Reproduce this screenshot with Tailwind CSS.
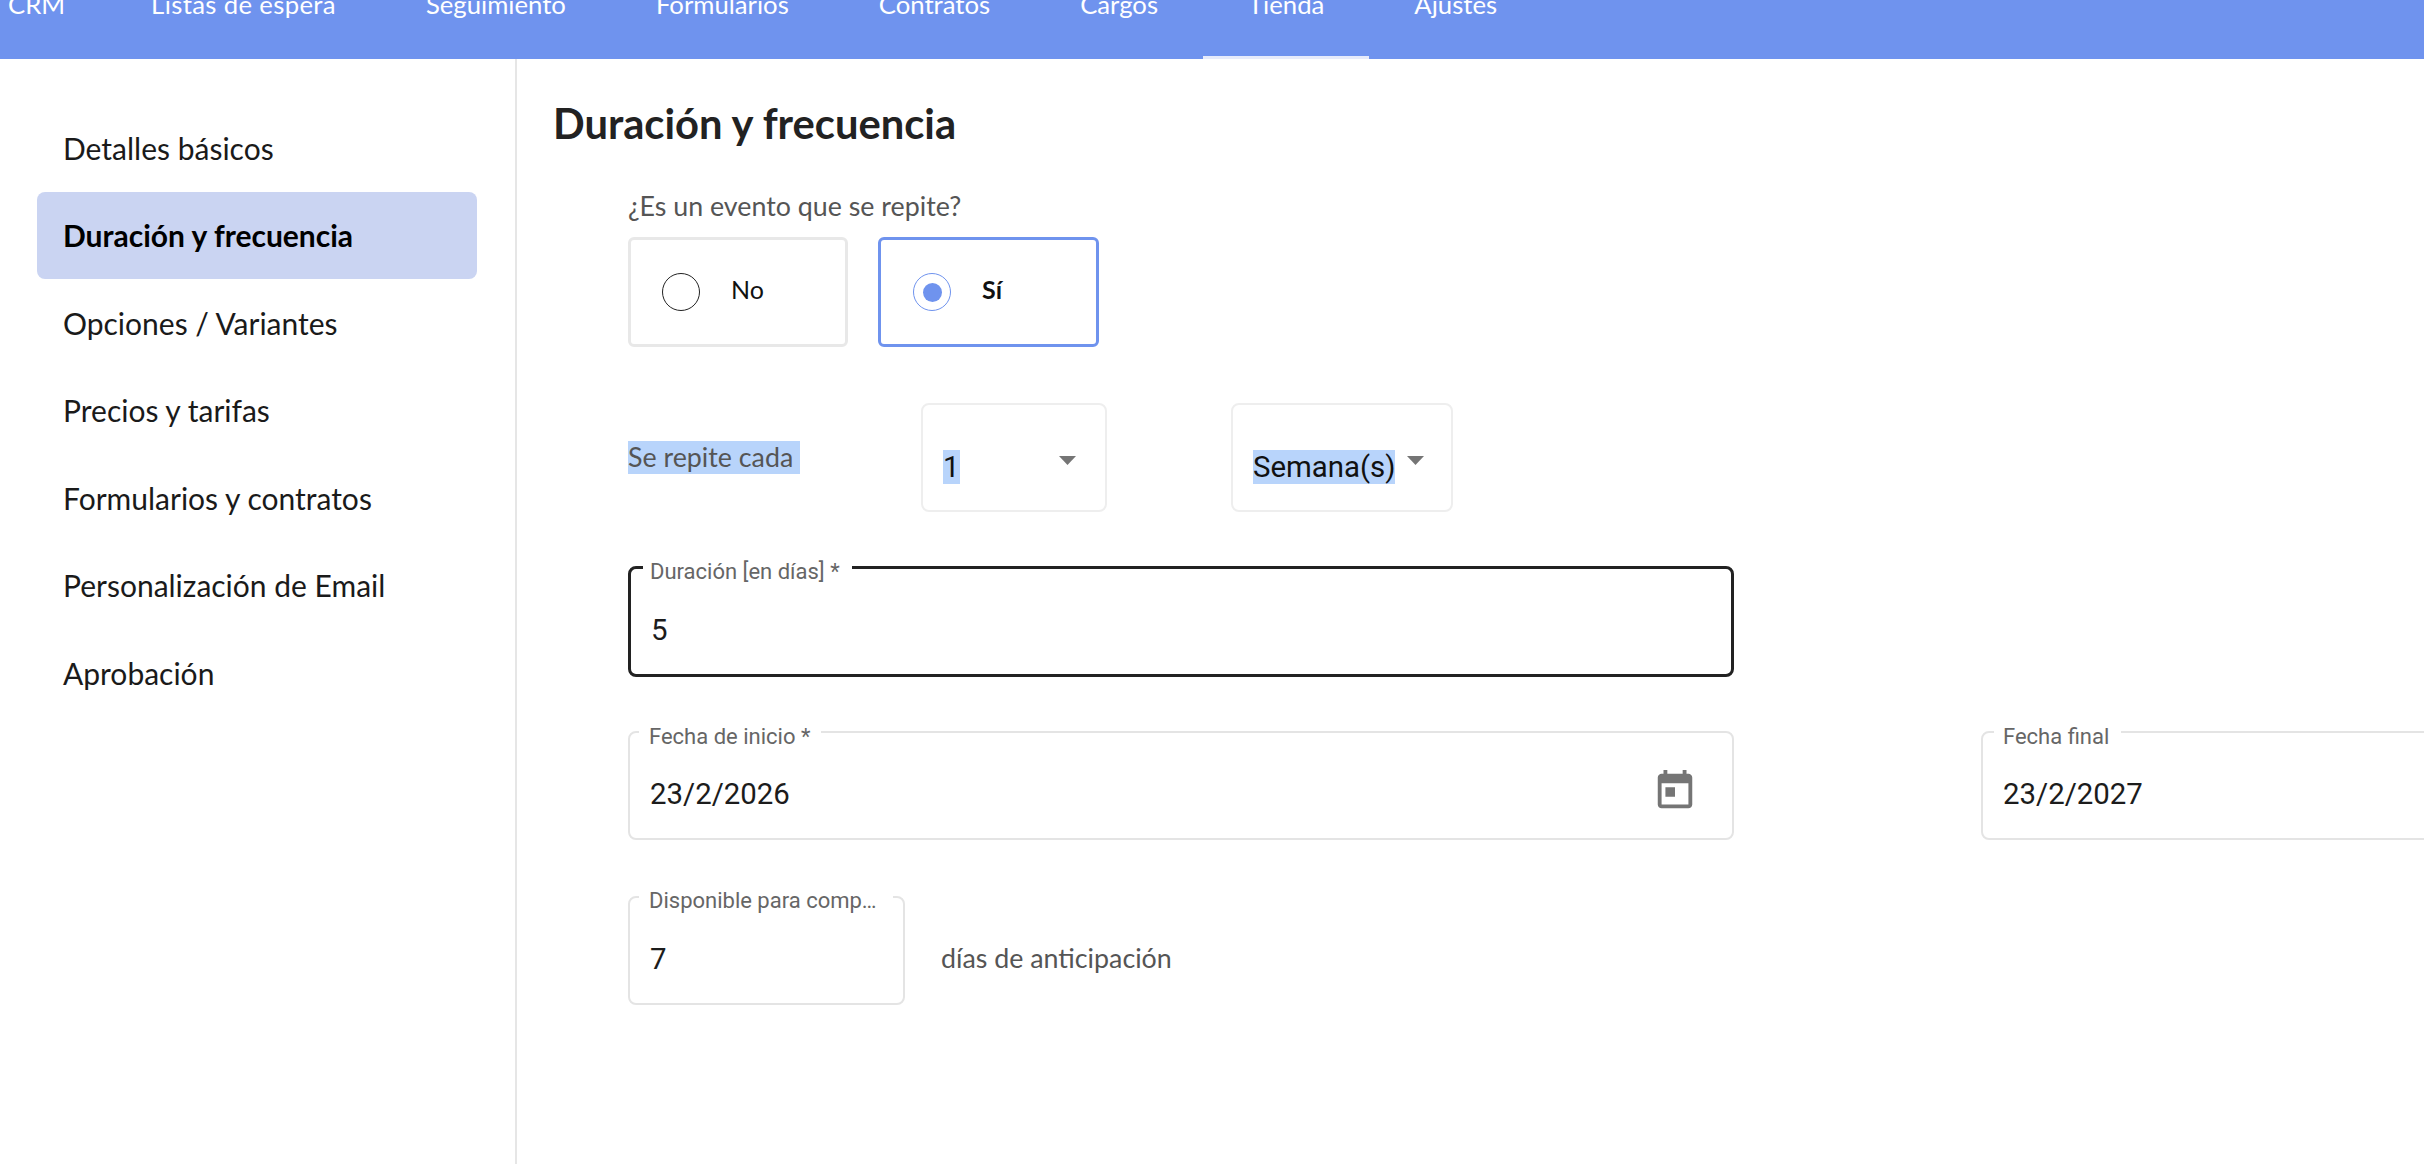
<!DOCTYPE html>
<html lang="es">
<head>
<meta charset="utf-8">
<script src="https://cdn.jsdelivr.net/npm/@tailwindcss/browser@4"></script>
<title>Duración y frecuencia</title>
</head>
<body class="bg-white overflow-hidden font-['Lato',sans-serif]">
<div class="w-[2424px] h-[1164px] overflow-hidden flex flex-col">
  <header class="h-[59px] shrink-0 bg-[#6f93ee] overflow-hidden">
    <nav class="flex ml-[-37px] text-white text-[25.7px] leading-[30px] h-[59px]">
      <div class="pl-[45px] pr-[41px] h-full"><div class="mt-[-11px]">CRM</div></div>
      <div class="px-[45px] h-full"><div class="mt-[-11px] tracking-[0.35px]">Listas de espera</div></div>
      <div class="px-[45px] h-full"><div class="mt-[-11px]">Seguimiento</div></div>
      <div class="px-[45px] h-full"><div class="mt-[-11px]">Formularios</div></div>
      <div class="px-[45px] h-full"><div class="mt-[-11px]">Contratos</div></div>
      <div class="px-[45px] h-full"><div class="mt-[-11px]">Cargos</div></div>
      <div class="px-[45px] h-full border-b-[3px] border-[#e6ebfb]"><div class="mt-[-11px]">Tienda</div></div>
      <div class="px-[45px] h-full"><div class="mt-[-11px]">Ajustes</div></div>
    </nav>
  </header>
  <main class="flex flex-1 min-h-0">
    <aside class="w-[517px] shrink-0 border-r-2 border-[#e6e6e6] pt-[45px] pl-[37px] pr-[38px] text-[30px] text-[#1a1a1a]">
      <div class="h-[87.5px] flex items-center pl-[26px] pt-[1px]">Detalles básicos</div>
      <div class="h-[87.5px] flex items-center pl-[26px] pt-[1px] bg-[#cad4f2] rounded-lg font-bold text-black">Duración y frecuencia</div>
      <div class="h-[87.5px] flex items-center pl-[26px] pt-[1px]">Opciones / Variantes</div>
      <div class="h-[87.5px] flex items-center pl-[26px] pt-[1px]">Precios y tarifas</div>
      <div class="h-[87.5px] flex items-center pl-[26px] pt-[1px]">Formularios y contratos</div>
      <div class="h-[87.5px] flex items-center pl-[26px] pt-[1px]">Personalización de Email</div>
      <div class="h-[87.5px] flex items-center pl-[26px] pt-[1px]">Aprobación</div>
    </aside>
    <section class="flex-1 min-w-0 pl-[36px]">
      <h1 class="mt-[42px] h-[46px] leading-[44px] text-[41.7px] font-bold text-[#222]">Duración y frecuencia</h1>
      <div class="ml-[75px]">
        <p class="mt-[43px] h-[32px] leading-[32px] text-[26.8px] text-[#555]">¿Es un evento que se repite?</p>
        <div class="mt-[15px] flex gap-[30px]">
          <div class="w-[220px] h-[110px] rounded-md border-[3px] border-[#e8e8e8] flex items-center pl-[31px]">
            <span class="w-[38px] h-[38px] rounded-full border-[1.5px] border-[#222]"></span>
            <span class="ml-[31px] pb-[4px] text-[25px] text-[#111]">No</span>
          </div>
          <div class="w-[221px] h-[110px] rounded-md border-[3px] border-[#6f93ee] flex items-center pl-[32px]">
            <span class="w-[38px] h-[38px] rounded-full border-[1.5px] border-[#6f93ee] flex items-center justify-center"><span class="w-[19px] h-[19px] rounded-full bg-[#6f93ee]"></span></span>
            <span class="ml-[31px] pb-[4px] text-[25px] font-bold text-[#111]">Sí</span>
          </div>
        </div>
        <div class="mt-[56px] flex items-center h-[109px]">
          <div class="w-[293px]"><span class="inline-block h-[33px] leading-[33px] pr-[7px] bg-[#b8d4fb] text-[26.8px] text-[#555]">Se repite cada</span></div>
          <div class="w-[186px] h-[109px] rounded-lg border-2 border-[#eeeeee] pl-[20px] pr-[29px] pt-[45px] flex justify-between items-start font-['Roboto',sans-serif] text-[29.4px] text-[#111]">
            <span class="h-[34px] leading-[34px] bg-[#b8d4fb]">1</span>
            <svg class="mt-[6px] w-[17px] h-[9px] fill-[#757575]" viewBox="0 0 17 9"><path d="M0 0h17l-8.5 9z"/></svg>
          </div>
          <div class="ml-[124px] w-[222px] h-[109px] rounded-lg border-2 border-[#eeeeee] pl-[20px] pr-[27px] pt-[45px] flex justify-between items-start font-['Roboto',sans-serif] text-[29.4px] text-[#111]">
            <span class="h-[34px] leading-[34px] bg-[#b8d4fb]">Semana(s)</span>
            <svg class="mt-[6px] w-[17px] h-[9px] fill-[#757575]" viewBox="0 0 17 9"><path d="M0 0h17l-8.5 9z"/></svg>
          </div>
        </div>
        <div class="relative mt-[54px] w-[1106px] h-[111px] rounded-lg border-[3px] border-[#222] pl-[20px] pt-[43px] font-['Roboto',sans-serif] text-[29.4px] leading-[36px] text-[#1c1c1c]">
          5
          <span class="absolute left-[12px] top-[-10px] pl-[7px] pr-[12px] h-[26px] leading-[26px] bg-white text-[22px] text-[#666]">Duración [en días] *</span>
        </div>
        <div class="mt-[54px] flex gap-[247px] w-[3000px]">
          <div class="relative w-[1106px] h-[109px] rounded-lg border-2 border-[#e4e4e4] pl-[20px] pt-[43px] font-['Roboto',sans-serif] text-[29.4px] leading-[36px] text-[#1c1c1c]">
            23/2/2026
            <span class="absolute left-[9px] top-[-9px] pl-[10px] pr-[11px] h-[26px] leading-[26px] bg-white text-[22px] text-[#666]">Fecha de inicio *</span>
            <svg class="absolute left-[1022px] top-[35px] w-[46px] h-[46px] fill-[#757575]" viewBox="0 0 24 24"><path d="M19 3h-1V1h-2v2H8V1H6v2H5c-1.11 0-1.99.9-1.99 2L3 19c0 1.1.89 2 2 2h14c1.1 0 2-.9 2-2V5c0-1.1-.9-2-2-2zm0 16H5V8h14v11zM7 10h5v5H7z"/></svg>
          </div>
          <div class="relative w-[1106px] h-[109px] rounded-lg border-2 border-[#e4e4e4] pl-[20px] pt-[43px] font-['Roboto',sans-serif] text-[29.4px] leading-[36px] text-[#1c1c1c]">
            23/2/2027
            <span class="absolute left-[11px] top-[-9px] pl-[9px] pr-[12px] h-[26px] leading-[26px] bg-white text-[22px] text-[#666]">Fecha final</span>
          </div>
        </div>
        <div class="mt-[56px] flex items-center">
          <div class="relative w-[277px] h-[109px] rounded-lg border-2 border-[#e4e4e4] pl-[20px] pt-[43px] font-['Roboto',sans-serif] text-[29.4px] leading-[36px] text-[#1c1c1c]">
            7
            <span class="absolute left-[9px] top-[-10px] pl-[10px] pr-[13px] w-[254px] truncate h-[26px] leading-[26px] bg-white text-[22px] text-[#666]">Disponible para compra con</span>
          </div>
          <span class="ml-[36px] mt-[15px] text-[26.8px] text-[#555]">días de anticipación</span>
        </div>
      </div>
    </section>
  </main>
</div>
</body>
</html>
